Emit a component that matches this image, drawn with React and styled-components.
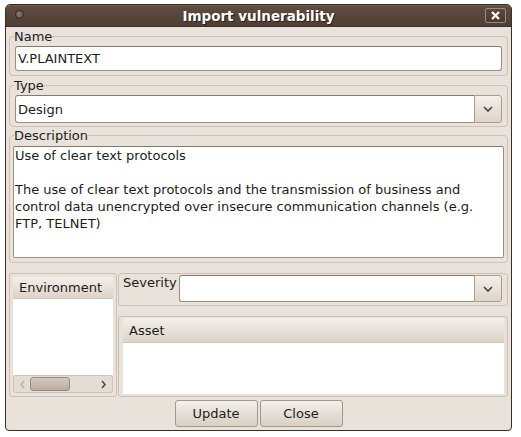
import styled, { createGlobalStyle } from 'styled-components';

const GlobalStyle = createGlobalStyle`
  body {
    margin: 0;
    background: #ffffff;
    font-family: "DejaVu Sans", "Liberation Sans", sans-serif;
    font-size: 13px;
    color: #1c1c1c;
  }
  * { box-sizing: border-box; }
`;

const Window = styled.div`
  margin: 4px 0 0 5px;
  width: 507px;
  height: 427px;
  border: 1px solid #3a2e27;
  border-radius: 5px 5px 4px 4px;
  background: #e8e2da;
  display: flex;
  flex-direction: column;
  overflow: hidden;
`;

const TitleBar = styled.div`
  position: relative;
  height: 22px;
  flex: none;
  display: flex;
  align-items: center;
  justify-content: center;
  background: linear-gradient(#725e50 0px, #5f4c3f 2px, #4e3e33 100%);
  border-bottom: 1px solid #3e3129;
`;

const Title = styled.div`
  color: #ffffff;
  font-weight: bold;
  font-size: 13.5px;
  text-shadow: 1px 1px 0 #2a1f19;
`;

const MenuDot = styled.div`
  position: absolute;
  left: 9px;
  top: 5px;
  width: 9px;
  height: 9px;
  border-radius: 50%;
  border: 1px solid #2f251f;
  background: radial-gradient(circle at 40% 35%, #8e7c6f, #5c4b3f);
`;

const CloseButton = styled.div`
  position: absolute;
  right: 5px;
  top: 3px;
  width: 21px;
  height: 15px;
  border: 1px solid #9c8b7d;
  border-radius: 2px;
  background: linear-gradient(#5e4a3d, #4a3a30);
  display: flex;
  align-items: center;
  justify-content: center;
`;

const Body = styled.div`
  flex: 1;
  display: flex;
  flex-direction: column;
  padding: 2px 3px 0 3px;
`;

const Group = styled.fieldset`
  margin: ${(p) => p.$top}px 0 0;
  padding: 0 ${(p) => p.$pad}px ${(p) => p.$bottom}px ${(p) => p.$pad}px;
  border: 1px solid #cbc1b6;
  border-radius: 4px;
  min-width: 0;

  & > legend {
    margin-left: ${(p) => 4 - p.$pad}px;
  }
`;

const Legend = styled.legend`
  padding: 0;
  line-height: 15px;
  font-size: 13px;
`;

const LineEdit = styled.div`
  margin-top: 2px;
  height: 25px;
  background: #ffffff;
  border: 1px solid #9b8f84;
  border-top-color: #85786d;
  border-radius: 3px;
  padding: 0 2px;
  display: flex;
  align-items: center;
`;

const Combo = styled.div`
  margin-top: ${(p) => p.$top}px;
  height: ${(p) => p.$height}px;
  display: flex;
  flex: ${(p) => (p.$grow ? 1 : 'none')};
`;

const ComboField = styled.div`
  flex: 1;
  background: #ffffff;
  border: 1px solid #9b8f84;
  border-top-color: #85786d;
  border-right: none;
  border-radius: 3px 0 0 3px;
  padding: 0 2px;
  display: flex;
  align-items: center;
`;

const ComboButton = styled.div`
  width: 28px;
  border: 1px solid #a99b8d;
  border-radius: 0 3px 3px 0;
  background: linear-gradient(#f3efea, #ddd4ca);
  display: flex;
  align-items: center;
  justify-content: center;
`;

const TextArea = styled.div`
  margin-top: 3px;
  height: 112px;
  background: #ffffff;
  border: 1px solid #9b8f84;
  border-top-color: #85786d;
  border-radius: 2px;
  padding: 0 1px;
  line-height: 17px;
  white-space: pre-line;
`;

const Lower = styled.div`
  margin-top: 10px;
  height: 124px;
  display: flex;
  gap: 1px;
`;

const Panel = styled.div`
  width: ${(p) => p.$width}px;
  border: 1px solid #cbc1b6;
  border-radius: 3px;
  padding: 3px;
  display: flex;
  flex-direction: column;
`;

const HeaderCell = styled.div`
  height: ${(p) => p.$height}px;
  flex: none;
  padding-left: 6px;
  display: flex;
  align-items: center;
  background: linear-gradient(#f2eeea, #e9e3dc 45%, #dcd3c9);
  border-bottom: 1px solid #cdc4ba;
`;

const ListArea = styled.div`
  flex: 1;
  background: #ffffff;
`;

const ScrollBar = styled.div`
  height: 18px;
  flex: none;
  border: 1px solid #cdc3b8;
  border-radius: 3px;
  background: #e4ddd5;
  display: flex;
  align-items: center;
  padding: 0 1px;
`;

const ScrollArrow = styled.div`
  width: 15px;
  display: flex;
  justify-content: center;
`;

const Thumb = styled.div`
  width: 40px;
  height: 14px;
  border: 1px solid #9a8b7e;
  border-radius: 3px;
  background: linear-gradient(#d3c9bf, #b9ac9f);
`;

const Spacer = styled.div`
  flex: 1;
`;

const RightColumn = styled.div`
  flex: 1;
  display: flex;
  flex-direction: column;
  gap: 10px;
`;

const SeverityBox = styled.div`
  height: 33px;
  flex: none;
  border: 1px solid #cbc1b6;
  border-radius: 3px;
  padding: 1px 5px 3px 4px;
  display: flex;
  gap: 2px;
`;

const FieldLabel = styled.div`
  line-height: 15px;
`;

const AssetPanel = styled.div`
  flex: 1;
  border: 1px solid #cbc1b6;
  border-radius: 3px;
  padding: 1px 3px 2px 4px;
  display: flex;
  flex-direction: column;
`;

const ButtonRow = styled.div`
  margin-top: 3px;
  display: flex;
  justify-content: center;
  gap: 2px;
`;

const Button = styled.div`
  width: 83px;
  height: 27px;
  border: 1px solid #a5978a;
  border-radius: 3px;
  background: linear-gradient(#f4f0ec, #e6dfd7 50%, #d9cfc5);
  display: flex;
  align-items: center;
  justify-content: center;
`;

const Chevron = ({ dir = 'down', color = '#3a3a3a' }) => {
  const points = {
    down: '1,1 5,5 9,1',
    left: '4,1 1,4.5 4,8',
    right: '1,1 4,4.5 1,8',
  }[dir];
  const size = dir === 'down' ? { w: 10, h: 6 } : { w: 5, h: 9 };
  return (
    <svg width={size.w} height={size.h} viewBox={`0 0 ${size.w} ${size.h}`}>
      <polyline points={points} fill="none" stroke={color} strokeWidth="1.5" />
    </svg>
  );
};

const description = `Use of clear text protocols

The use of clear text protocols and the transmission of business and
control data unencrypted over insecure communication channels (e.g.
FTP, TELNET)`;

export default function App() {
  return (
    <>
      <GlobalStyle />
      <Window>
        <TitleBar>
          <MenuDot />
          <Title>Import vulnerability</Title>
          <CloseButton>
            <svg width="9" height="9" viewBox="0 0 9 9">
              <path d="M1 1 L8 8 M8 1 L1 8" stroke="#ffffff" strokeWidth="2.2" />
            </svg>
          </CloseButton>
        </TitleBar>
        <Body>
          <Group $top={0} $pad={5} $bottom={4}>
            <Legend>Name</Legend>
            <LineEdit>V.PLAINTEXT</LineEdit>
          </Group>
          <Group $top={2} $pad={5} $bottom={3}>
            <Legend>Type</Legend>
            <Combo $top={2} $height={28}>
              <ComboField>Design</ComboField>
              <ComboButton>
                <Chevron />
              </ComboButton>
            </Combo>
          </Group>
          <Group $top={1} $pad={3} $bottom={4}>
            <Legend>Description</Legend>
            <TextArea>{description}</TextArea>
          </Group>
          <Lower>
            <Panel $width={108}>
              <HeaderCell $height={22}>Environment</HeaderCell>
              <ListArea />
              <ScrollBar>
                <ScrollArrow>
                  <Chevron dir="left" color="#bdb3a9" />
                </ScrollArrow>
                <Thumb />
                <Spacer />
                <ScrollArrow>
                  <Chevron dir="right" color="#4a4a4a" />
                </ScrollArrow>
              </ScrollBar>
            </Panel>
            <RightColumn>
              <SeverityBox>
                <FieldLabel>Severity</FieldLabel>
                <Combo $top={0} $height={27} $grow>
                  <ComboField />
                  <ComboButton>
                    <Chevron />
                  </ComboButton>
                </Combo>
              </SeverityBox>
              <AssetPanel>
                <HeaderCell $height={25}>Asset</HeaderCell>
                <ListArea />
              </AssetPanel>
            </RightColumn>
          </Lower>
          <ButtonRow>
            <Button>Update</Button>
            <Button>Close</Button>
          </ButtonRow>
        </Body>
      </Window>
    </>
  );
}
